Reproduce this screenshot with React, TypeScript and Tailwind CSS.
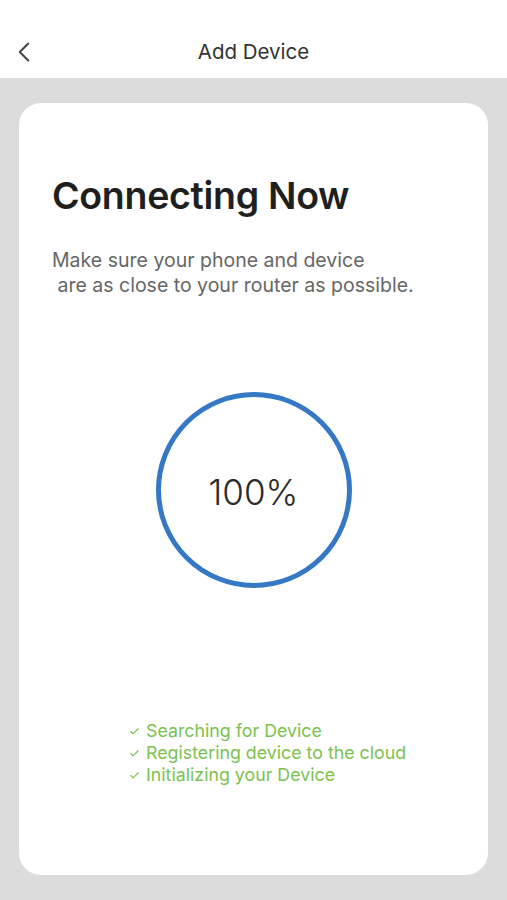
import { ChevronLeft, Check } from 'lucide-react'

const STEPS = ['Searching for Device', 'Registering device to the cloud', 'Initializing your Device']

export default function App() {
  return (
    <div className="flex h-[900px] w-[507px] flex-col bg-[#dcdcdc] font-['Inter','Liberation_Sans',sans-serif]">
      {/* header */}
      <div className="relative flex h-[78px] shrink-0 items-end justify-center bg-white pb-[10px]">
        <ChevronLeft className="absolute left-[7px] top-[35px] size-[34px] text-[#444]" strokeWidth={1.4} />
        <span className="text-[20.5px] text-[#333]">Add Device</span>
      </div>

      <div className="flex flex-1 px-[19px] pt-[25px] pb-[25px]">
        <div className="flex flex-1 flex-col rounded-[22px] bg-white px-[33px] pt-[71px]">
          <h1 className="text-[37.5px] font-semibold leading-[44px] tracking-[-0.3px] text-[#1f1f1f]">Connecting Now</h1>
          <p className="mt-[30px] text-[19.5px] leading-[25px] text-[#666]">
            Make sure your phone and device
            <br />
            &nbsp;are as close to your router as possible.
          </p>

          <div className="mt-[94px] flex justify-center">
            <div className="flex size-[196px] items-center justify-center rounded-full border-[5px] border-[#3478c6]">
              <span className="mt-[4px] text-[35px] font-light text-[#2a2a2a]">100%</span>
            </div>
          </div>

          <ul className="mt-[132px] ml-[77px] flex flex-col text-[17.8px] leading-[22px] text-[#7cc24f]">
            {STEPS.map(step => (
              <li key={step} className="flex items-center gap-[6px]">
                <Check className="size-[11px]" strokeWidth={2.5} />
                <span>{step}</span>
              </li>
            ))}
          </ul>
        </div>
      </div>
    </div>
  )
}
